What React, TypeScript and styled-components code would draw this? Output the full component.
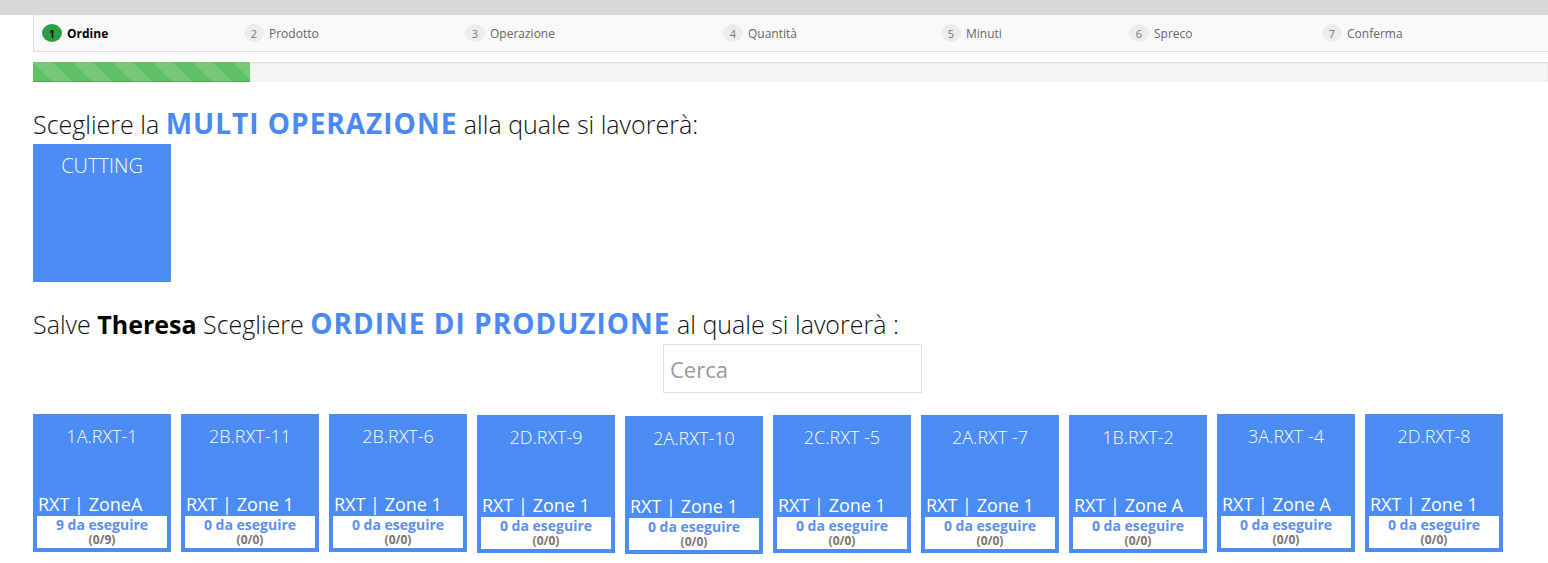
import React from "react";
import styled, { createGlobalStyle } from "styled-components";

const GlobalStyle = createGlobalStyle`
  html, body {
    margin: 0;
    padding: 0;
    background: #ffffff;
    font-family: "Open Sans", "Liberation Sans", sans-serif;
    color: #222222;
  }
`;

const steps = ["Ordine", "Prodotto", "Operazione", "Quantità", "Minuti", "Spreco", "Conferma"];

const orders = [
  { code: "1A.RXT-1", zone: "RXT | ZoneA", todo: 9, done: "(0/9)", drop: 0 },
  { code: "2B.RXT-11", zone: "RXT | Zone 1", todo: 0, done: "(0/0)", drop: 0 },
  { code: "2B.RXT-6", zone: "RXT | Zone 1", todo: 0, done: "(0/0)", drop: 0 },
  { code: "2D.RXT-9", zone: "RXT | Zone 1", todo: 0, done: "(0/0)", drop: 1 },
  { code: "2A.RXT-10", zone: "RXT | Zone 1", todo: 0, done: "(0/0)", drop: 2 },
  { code: "2C.RXT -5", zone: "RXT | Zone 1", todo: 0, done: "(0/0)", drop: 1 },
  { code: "2A.RXT -7", zone: "RXT | Zone 1", todo: 0, done: "(0/0)", drop: 1 },
  { code: "1B.RXT-2", zone: "RXT | Zone A", todo: 0, done: "(0/0)", drop: 1 },
  { code: "3A.RXT -4", zone: "RXT | Zone A", todo: 0, done: "(0/0)", drop: 0 },
  { code: "2D.RXT-8", zone: "RXT | Zone 1", todo: 0, done: "(0/0)", drop: 0 },
];

export default function App() {
  return (
    <>
      <GlobalStyle />
      <TopBand />
      <Page>
        <Wizard>
          {steps.map((label, i) => (
            <Step key={label}>
              <StepNumber $active={i === 0}>{i + 1}</StepNumber>
              <StepLabel $active={i === 0}>{label}</StepLabel>
            </Step>
          ))}
        </Wizard>
        <ProgressTrack>
          <ProgressBar style={{ width: "217px" }} />
        </ProgressTrack>

        <Heading>
          Scegliere la <Accent>MULTI OPERAZIONE</Accent> alla quale si lavorerà:
        </Heading>
        <OperationTile>CUTTING</OperationTile>

        <Heading>
          Salve <Name>Theresa</Name> Scegliere <Accent>ORDINE DI PRODUZIONE</Accent> al quale si
          lavorerà :
        </Heading>
        <SearchRow>
          <SearchInput placeholder="Cerca" />
        </SearchRow>

        <OrderGrid>
          {orders.map((o) => (
            <OrderTile key={o.code} $drop={o.drop}>
              <OrderCode>{o.code}</OrderCode>
              <OrderZone>{o.zone}</OrderZone>
              <CountBox>
                <CountMain>{o.todo} da eseguire</CountMain>
                <CountSub>{o.done}</CountSub>
              </CountBox>
            </OrderTile>
          ))}
        </OrderGrid>
      </Page>
    </>
  );
}

const TopBand = styled.div`
  height: 15px;
  background: #d8d8d8;
`;

const Page = styled.div`
  padding-left: 33px;
`;

const Wizard = styled.div`
  display: grid;
  grid-template-columns: 202px 221px 258px 218px 188px 193px 1fr;
  align-items: center;
  height: 36px;
  padding-left: 8px;
  background: #f9f9f9;
  border: 1px solid #dcdcdc;
  border-top: none;
  border-right: none;
`;

const Step = styled.div`
  display: flex;
  align-items: center;
  gap: 5px;
`;

const StepNumber = styled.span<{ $active: boolean }>`
  display: inline-flex;
  align-items: center;
  justify-content: center;
  width: 20px;
  height: 18px;
  border-radius: 50%;
  font-size: 11px;
  font-weight: ${(p) => (p.$active ? 700 : 400)};
  background: ${(p) => (p.$active ? "#2e9e45" : "#ececec")};
  color: ${(p) => (p.$active ? "#111111" : "#777777")};
`;

const StepLabel = styled.span<{ $active: boolean }>`
  font-size: 12px;
  font-weight: ${(p) => (p.$active ? 700 : 400)};
  color: ${(p) => (p.$active ? "#000000" : "#666666")};
`;

const ProgressTrack = styled.div`
  margin-top: 10px;
  height: 20px;
  background: #f5f5f5;
  box-shadow: inset 0 1px 2px rgba(0, 0, 0, 0.1);
`;

const ProgressBar = styled.div`
  height: 100%;
  background-color: #5fc063;
  background-image: linear-gradient(
    45deg,
    rgba(255, 255, 255, 0.15) 25%,
    transparent 25%,
    transparent 50%,
    rgba(255, 255, 255, 0.15) 50%,
    rgba(255, 255, 255, 0.15) 75%,
    transparent 75%,
    transparent
  );
  background-size: 40px 40px;
  box-shadow: inset 0 -1px 0 rgba(0, 0, 0, 0.15);
`;

const Heading = styled.h2`
  margin: 22px 0 4px;
  height: 36px;
  font-size: 25px;
  font-weight: 300;
  color: #111111;
  line-height: 38px;
  white-space: nowrap;
`;

const Accent = styled.b`
  font-size: 28px;
  font-weight: 700;
  letter-spacing: 1px;
  color: #4a89f3;
`;

const Name = styled.b`
  font-weight: 700;
  color: #000000;
`;

const OperationTile = styled.div`
  width: 138px;
  height: 138px;
  box-sizing: border-box;
  padding-top: 8px;
  background: #4c8cf5;
  color: #ffffff;
  font-size: 20px;
  font-weight: 300;
  text-align: center;
`;

const SearchRow = styled.div`
  display: flex;
  justify-content: center;
  padding-left: 4px;
`;

const SearchInput = styled.input`
  width: 259px;
  height: 49px;
  box-sizing: border-box;
  padding: 0 6px;
  border: 1px solid #e0e0e0;
  font-family: inherit;
  font-size: 22px;
  color: #555555;
  outline: none;

  &::placeholder {
    color: #9a9a9a;
  }
`;

const OrderGrid = styled.div`
  display: flex;
  gap: 10px;
  align-items: flex-start;
  margin-top: 21px;
`;

const OrderTile = styled.div<{ $drop: number }>`
  width: 138px;
  height: 138px;
  box-sizing: border-box;
  margin-top: ${(p) => p.$drop}px;
  padding: 4px;
  display: flex;
  flex-direction: column;
  background: #4c8cf5;
  color: #ffffff;
`;

const OrderCode = styled.div`
  flex: 1;
  padding-top: 6px;
  font-size: 18px;
  font-weight: 300;
  text-align: center;
`;

const OrderZone = styled.div`
  padding-left: 1px;
  font-size: 18px;
  line-height: 24px;
  white-space: nowrap;
`;

const CountBox = styled.div`
  height: 32px;
  box-sizing: border-box;
  padding-top: 1px;
  background: #ffffff;
  text-align: center;
  font-weight: 700;
`;

const CountMain = styled.div`
  font-size: 14px;
  line-height: 16px;
  color: #5b8ff0;
`;

const CountSub = styled.div`
  font-size: 12px;
  line-height: 14px;
  color: #7a7571;
`;
